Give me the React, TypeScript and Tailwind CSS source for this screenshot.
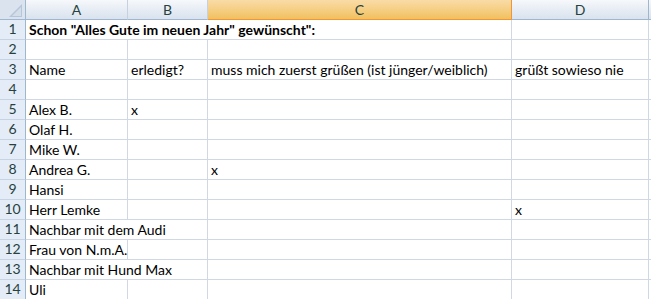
import React from "react";

type Row = {
  cells: string[];
  bold?: boolean;
  // columns whose right gridline is hidden because text spills over
  open?: number[];
};

const rows: Row[] = [
  { cells: ['Schon "Alles Gute im neuen Jahr" gewünscht":', "", "", ""], bold: true, open: [0, 1] },
  { cells: ["", "", "", ""] },
  { cells: ["Name", "erledigt?", "muss mich zuerst grüßen (ist jünger/weiblich)", "grüßt sowieso nie"] },
  { cells: ["", "", "", ""] },
  { cells: ["Alex B.", "x", "", ""] },
  { cells: ["Olaf H.", "", "", ""] },
  { cells: ["Mike W.", "", "", ""] },
  { cells: ["Andrea G.", "", "x", ""] },
  { cells: ["Hansi", "", "", ""] },
  { cells: ["Herr Lemke", "", "", "x"] },
  { cells: ["Nachbar mit dem Audi", "", "", ""], open: [0] },
  { cells: ["Frau von N.m.A.", "", "", ""] },
  { cells: ["Nachbar mit Hund Max", "", "", ""], open: [0] },
  { cells: ["Uli", "", "", ""] },
];

const gridCols = "grid grid-cols-[26px_102px_80px_304px_137px_1fr]";

function ColHeader({ label, selected }: { label: string; selected?: boolean }) {
  return (
    <div
      className={
        selected
          ? "flex h-5 items-center justify-center border-r border-b border-[#f29536] bg-gradient-to-b from-[#f9dca6] to-[#f1c15e] text-[#27413e]"
          : "flex h-5 items-center justify-center border-r border-b border-r-[#c5d1de] border-b-[#9eb6ce] bg-gradient-to-b from-[#f6f8fb] to-[#d9e2ee] text-[#27413e]"
      }
    >
      {label}
    </div>
  );
}

export default function App() {
  return (
    <div
      className="h-[299px] w-[651px] overflow-hidden bg-white text-[14px] text-black"
      style={{ fontFamily: "Lato, 'Liberation Sans', sans-serif" }}
    >
      {/* column headers */}
      <div className={gridCols}>
        <div className="relative h-5 border-r border-b border-[#9eb6ce] bg-[#dbe3ee]">
          <svg className="absolute right-[3px] bottom-[2px]" width="13" height="13" viewBox="0 0 13 13">
            <polygon points="13,0 13,13 0,13" fill="#b6c6da" />
            <polygon points="12,3 12,12 3,12" fill="#d4dee9" />
          </svg>
        </div>
        <ColHeader label="A" />
        <ColHeader label="B" />
        <ColHeader label="C" selected />
        <div className="flex h-5 items-center justify-center border-r border-b border-r-[#9eb6ce] border-b-[#9eb6ce] bg-gradient-to-b from-[#f6f8fb] to-[#d9e2ee] text-[#27413e]">
          D
        </div>
        <div className="h-5 border-b border-[#9eb6ce] bg-gradient-to-b from-[#f6f8fb] to-[#d9e2ee]" />
      </div>

      {/* sheet body */}
      {rows.map((row, i) => (
        <div key={i} className={gridCols}>
          <div className="flex h-5 items-end justify-center border-r border-b border-r-[#9eb6ce] border-b-[#c5d3e3] bg-[#e4ecf7] pb-[1px] leading-[18px] text-[#27413e]">
            {i + 1}
          </div>
          {row.cells.map((text, c) => (
            <div
              key={c}
              className={
                "flex h-5 items-end whitespace-nowrap border-b border-[#d0d7e5] pl-[3px] leading-[18px] " +
                (row.open?.includes(c) ? "" : "border-r ") +
                (row.bold ? "font-bold" : "")
              }
            >
              {text}
            </div>
          ))}
          <div className="h-5 border-b border-[#d0d7e5]" />
        </div>
      ))}
    </div>
  );
}
